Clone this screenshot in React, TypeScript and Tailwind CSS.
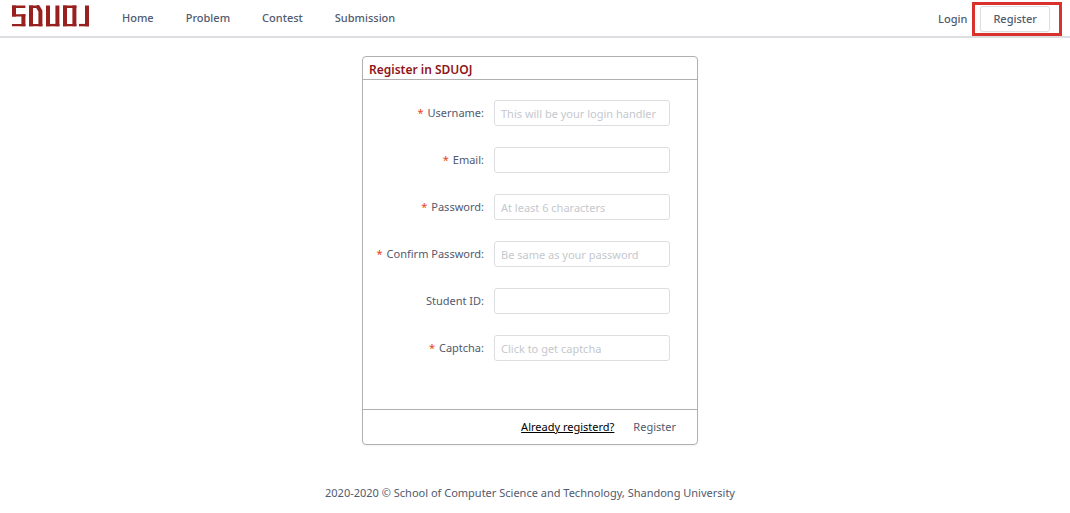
import type { ReactNode } from 'react';

type Field = {
  id: string;
  label: string;
  type: string;
  required: boolean;
  placeholder?: string;
};

const navItems = ['Home', 'Problem', 'Contest', 'Submission'];

const fields: Field[] = [
  { id: 'username', label: 'Username:', type: 'text', required: true, placeholder: 'This will be your login handler' },
  { id: 'email', label: 'Email:', type: 'email', required: true },
  { id: 'password', label: 'Password:', type: 'password', required: true, placeholder: 'At least 6 characters' },
  { id: 'confirm', label: 'Confirm Password:', type: 'password', required: true, placeholder: 'Be same as your password' },
  { id: 'student', label: 'Student ID:', type: 'text', required: false },
  { id: 'captcha', label: 'Captcha:', type: 'text', required: true, placeholder: 'Click to get captcha' },
];

function Logo() {
  return (
    <svg role="img" aria-label="SDUOJ" width="79" height="22" viewBox="0 0 79 22" fill="none" stroke="#98211f">
      <g strokeWidth="2.4">
        <path d="M1 1.7H14.4M1 10.4H14.4M1 20.1H14.4" />
        <path d="M18 1.7H27M18 20.1H31.4" />
        <path d="M35 20.1H48.4" />
        <path d="M52 1.7H65.4M52 20.1H65.4" />
        <path d="M68 20.1H78" />
      </g>
      <g strokeWidth="4">
        <path d="M3 0.5V11.6M12.4 9.2V21.3" />
        <path d="M20 0.5V21.3M26 0.5L29.4 6V21.3" />
        <path d="M37 0.5V21.3M46.4 0.5V21.3" />
        <path d="M54 0.5V21.3M63.4 0.5V21.3" />
        <path d="M76 0.5V21.3" />
      </g>
    </svg>
  );
}

function Highlight({ children }: { children: ReactNode }) {
  return (
    <div className="relative">
      {children}
      <span className="pointer-events-none absolute -top-1 -right-3 -bottom-1 -left-2 border-3 border-[#d9322d]" />
    </div>
  );
}

function Header() {
  return (
    <header className="flex h-[38px] items-center justify-between border-b-2 border-[#dcdee2] pr-5 pl-[11px]">
      <div className="flex items-center gap-8">
        <a href="#" className="-mt-1">
          <Logo />
        </a>
        <nav className="flex gap-8 text-[#515a6e]">
          {navItems.map((item) => (
            <a key={item} href="#" className="font-medium">
              {item}
            </a>
          ))}
        </nav>
      </div>
      <div className="flex items-center gap-[13px] pt-px font-medium text-[#515a6e]">
        <a href="#">Login</a>
        <Highlight>
          <button type="button" className="h-[26px] rounded-[3px] border border-[#dcdee2] px-3 shadow-xs">
            Register
          </button>
        </Highlight>
      </div>
    </header>
  );
}

function FieldRow({ field }: { field: Field }) {
  return (
    <div className="flex items-center gap-[10px]">
      <label htmlFor={field.id} className="w-[121px] text-right text-[#515a6e]">
        {field.required && <span className="mr-1 text-[#ed4014]">*</span>}
        {field.label}
      </label>
      <input
        id={field.id}
        type={field.type}
        placeholder={field.placeholder}
        className="h-[26px] min-w-0 flex-1 rounded-[3px] border border-[#dcdee2] px-[6px] outline-none placeholder:text-[#c5c8ce]"
      />
    </div>
  );
}

export default function App() {
  return (
    <div className="bg-white font-['Noto_Sans',sans-serif] text-[11px] leading-4">
      <Header />
      <main className="pt-[18px] pr-[10px]">
        <form className="mx-auto w-full max-w-[336px] rounded-sm border border-[#b0b0b0] shadow-xs">
          <h1 className="border-b border-[#b0b0b0] px-[6px] pt-[5px] pb-px text-[12px] leading-4 font-semibold text-[#8f1517]">
            Register in SDUOJ
          </h1>
          <div className="flex flex-col gap-[21px] pt-5 pr-[27px] pb-12">
            {fields.map((field) => (
              <FieldRow key={field.id} field={field} />
            ))}
          </div>
          <div className="flex h-[35px] items-center justify-end gap-[19px] border-t border-[#b0b0b0] pr-[21px]">
            <a href="#" className="text-black underline">
              Already registerd?
            </a>
            <button type="submit" className="text-[#515a6e]">
              Register
            </button>
          </div>
        </form>
        <footer className="pt-10 pb-2 text-center text-[#515a6e]">
          2020-2020 © School of Computer Science and Technology, Shandong University
        </footer>
      </main>
    </div>
  );
}
